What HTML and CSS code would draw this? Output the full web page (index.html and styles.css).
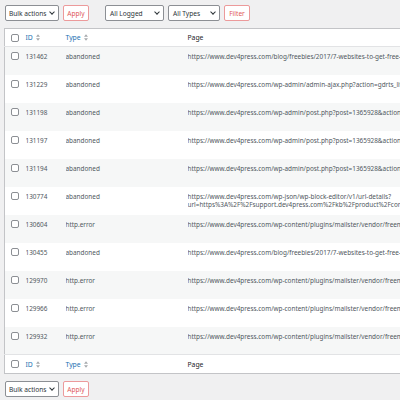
FILE: index.html
```html
<!DOCTYPE html>
<html lang="en">
<head>
    <meta charset="UTF-8">
    <title>Logs</title>
    <link rel="stylesheet" href="styles.css">
</head>
<body>
    <div class="tablenav">
        <div class="select">Bulk actions <span class="chev"></span></div>
        <button class="btn">Apply</button>
        <div class="spacer"></div>
        <div class="select logged">All Logged <span class="chev"></span></div>
        <div class="select types">All Types <span class="chev"></span></div>
        <button class="btn">Filter</button>
    </div>

    <table class="logs">
        <colgroup>
            <col class="c-cb">
            <col class="c-id">
            <col class="c-type">
            <col class="c-page">
        </colgroup>
        <thead>
            <tr>
                <th><span class="cb"></span></th>
                <th><a>ID</a><svg class="sort" viewBox="0 0 5 8"><path d="M2.5 0L5 3H0zM2.5 8L0 5h5z"/></svg></th>
                <th><a>Type</a><svg class="sort" viewBox="0 0 5 8"><path d="M2.5 0L5 3H0zM2.5 8L0 5h5z"/></svg></th>
                <th>Page</th>
            </tr>
        </thead>
        <tbody>
            <tr><td><span class="cb"></span></td><td>131462</td><td>abandoned</td><td>https://www.dev4press.com/blog/freebies/2017/7-websites-to-get-free-wordpress-themes/</td></tr>
            <tr><td><span class="cb"></span></td><td>131229</td><td>abandoned</td><td>https://www.dev4press.com/wp-admin/admin-ajax.php?action=gdrts_live_handler</td></tr>
            <tr><td><span class="cb"></span></td><td>131198</td><td>abandoned</td><td>https://www.dev4press.com/wp-admin/post.php?post=1365928&amp;action=edit</td></tr>
            <tr><td><span class="cb"></span></td><td>131197</td><td>abandoned</td><td>https://www.dev4press.com/wp-admin/post.php?post=1365928&amp;action=edit</td></tr>
            <tr><td><span class="cb"></span></td><td>131194</td><td>abandoned</td><td>https://www.dev4press.com/wp-admin/post.php?post=1365928&amp;action=edit</td></tr>
            <tr><td><span class="cb"></span></td><td>130774</td><td>abandoned</td><td>https://www.dev4press.com/wp-json/wp-block-editor/v1/url-details?<br>url=https%3A%2F%2Fsupport.dev4press.com%2Fkb%2Fproduct%2Fcoreactivity%2F</td></tr>
            <tr><td><span class="cb"></span></td><td>130604</td><td>http.error</td><td>https://www.dev4press.com/wp-content/plugins/mailster/vendor/freemius/</td></tr>
            <tr><td><span class="cb"></span></td><td>130455</td><td>abandoned</td><td>https://www.dev4press.com/blog/freebies/2017/7-websites-to-get-free-wordpress-themes/</td></tr>
            <tr><td><span class="cb"></span></td><td>129970</td><td>http.error</td><td>https://www.dev4press.com/wp-content/plugins/mailster/vendor/freemius/</td></tr>
            <tr><td><span class="cb"></span></td><td>129966</td><td>http.error</td><td>https://www.dev4press.com/wp-content/plugins/mailster/vendor/freemius/</td></tr>
            <tr><td><span class="cb"></span></td><td>129932</td><td>http.error</td><td>https://www.dev4press.com/wp-content/plugins/mailster/vendor/freemius/</td></tr>
        </tbody>
        <tfoot>
            <tr>
                <th><span class="cb"></span></th>
                <th><a>ID</a><svg class="sort" viewBox="0 0 5 8"><path d="M2.5 0L5 3H0zM2.5 8L0 5h5z"/></svg></th>
                <th><a>Type</a><svg class="sort" viewBox="0 0 5 8"><path d="M2.5 0L5 3H0zM2.5 8L0 5h5z"/></svg></th>
                <th>Page</th>
            </tr>
        </tfoot>
    </table>

    <div class="tablenav bottom">
        <div class="select">Bulk actions <span class="chev"></span></div>
        <button class="btn">Apply</button>
    </div>
</body>
</html>
```

FILE: styles.css
```css
body {
    margin: 0;
    padding: 0 0 0 4px;
    width: 396px;
    background-color: #f0f0f1;
    font-family: "Noto Sans", "Open Sans", sans-serif;
    font-size: 6.4px;
    color: #50575e;
    overflow: hidden;
}

/* toolbar above and below the list */
.tablenav {
    display: flex;
    align-items: center;
    gap: 4px;
    height: 16px;
    margin: 5px 0 7px 1px;
}

.tablenav.bottom {
    margin-top: 7px;
}

.spacer {
    width: 8px;
}

.select {
    display: flex;
    align-items: center;
    justify-content: space-between;
    box-sizing: border-box;
    height: 16px;
    width: 54px;
    padding: 0 4px 0 3px;
    background-color: white;
    border: 1px solid #8c8f94;
    border-radius: 2px;
    color: #2c3338;
    font-size: 6.6px;
    white-space: nowrap;
}

.select.logged {
    width: 59px;
    padding-left: 4px;
}

.select.types {
    width: 52px;
    padding-left: 4px;
}

.chev {
    flex: none;
    width: 3px;
    height: 3px;
    border-right: 1px solid #2c3338;
    border-bottom: 1px solid #2c3338;
    transform: rotate(45deg);
    margin-top: -2px;
}

.btn {
    box-sizing: border-box;
    height: 16px;
    width: 26px;
    padding: 0;
    background-color: white;
    border: 1px solid #ec9a9b;
    border-radius: 2px;
    color: #e0585a;
    font-family: inherit;
    font-size: 6.6px;
}

/* the list table, wider than the screen, clipped on the right */
.logs {
    border-collapse: collapse;
    table-layout: fixed;
    width: 680px;
    background-color: white;
    border: 1px solid #c3c4c7;
}

.c-cb { width: 21px; }
.c-id { width: 40px; }
.c-type { width: 122px; }

.logs th {
    height: 17px;
    padding: 0;
    text-align: left;
    font-weight: normal;
    font-size: 6.8px;
    color: #1d2327;
    white-space: nowrap;
}

.logs thead th {
    border-bottom: 1px solid #e2e3e5;
}

.logs tfoot th {
    border-top: 1px solid #e2e3e5;
    height: 18px;
}

.logs th a {
    color: #2271b1;
}

.sort {
    width: 4px;
    height: 7px;
    margin-left: 3px;
    vertical-align: -1px;
    fill: #a7aaad;
}

.logs td {
    height: 28px;
    box-sizing: border-box;
    padding: 6px 0 0 0;
    vertical-align: top;
    line-height: 8.5px;
    white-space: nowrap;
    overflow: hidden;
}

.logs tbody tr:nth-child(odd) {
    background-color: #f6f7f7;
}

.logs tbody td:first-child {
    padding-top: 5px;
}

.cb {
    display: block;
    box-sizing: border-box;
    width: 8px;
    height: 8px;
    margin-left: 6px;
    background-color: white;
    border: 1px solid #8c8f94;
    border-radius: 2px;
}
```
